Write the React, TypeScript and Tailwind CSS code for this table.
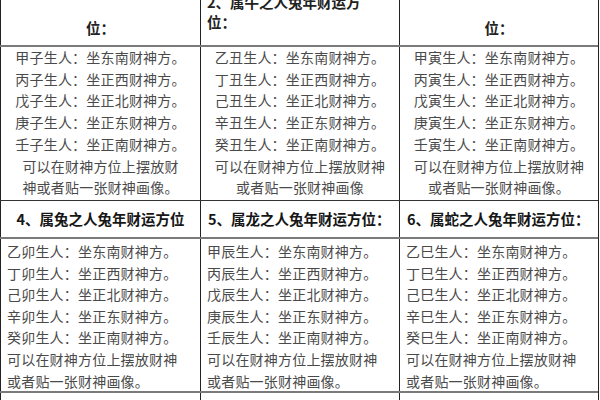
const font = { fontFamily: '"Noto Sans CJK SC", "Noto Sans", sans-serif' };

const row1 = [
  {
    lines: [
      "甲子生人：坐东南财神方。",
      "丙子生人：坐正西财神方。",
      "戊子生人：坐正北财神方。",
      "庚子生人：坐正东财神方。",
      "壬子生人：坐正南财神方。",
      "可以在财神方位上摆放财",
      "神或者贴一张财神画像。",
    ],
  },
  {
    lines: [
      "乙丑生人：坐东南财神方。",
      "丁丑生人：坐正西财神方。",
      "己丑生人：坐正北财神方。",
      "辛丑生人：坐正东财神方。",
      "癸丑生人：坐正南财神方。",
      "可以在财神方位上摆放财神",
      "或者贴一张财神画像",
    ],
  },
  {
    lines: [
      "甲寅生人：坐东南财神方。",
      "丙寅生人：坐正西财神方。",
      "戊寅生人：坐正北财神方。",
      "庚寅生人：坐正东财神方。",
      "壬寅生人：坐正南财神方。",
      "可以在财神方位上摆放财神",
      "或者贴一张财神画像。",
    ],
  },
];

const row2 = [
  {
    title: "4、属兔之人兔年财运方位",
    center: true,
    lines: [
      "乙卯生人：坐东南财神方。",
      "丁卯生人：坐正西财神方。",
      "己卯生人：坐正北财神方。",
      "辛卯生人：坐正东财神方。",
      "癸卯生人：坐正南财神方。",
      "可以在财神方位上摆放财神",
      "或者贴一张财神画像。",
    ],
  },
  {
    title: "5、属龙之人兔年财运方位：",
    center: false,
    lines: [
      "甲辰生人：坐东南财神方。",
      "丙辰生人：坐正西财神方。",
      "戊辰生人：坐正北财神方。",
      "庚辰生人：坐正东财神方。",
      "壬辰生人：坐正南财神方。",
      "可以在财神方位上摆放财神",
      "或者贴一张财神画像。",
    ],
  },
  {
    title: "6、属蛇之人兔年财运方位：",
    center: false,
    lines: [
      "乙巳生人：坐东南财神方。",
      "丁巳生人：坐正西财神方。",
      "己巳生人：坐正北财神方。",
      "辛巳生人：坐正东财神方。",
      "癸巳生人：坐正南财神方。",
      "可以在财神方位上摆放财神",
      "或者贴一张财神画像。",
    ],
  },
];

const colW = ["w-[200px]", "w-[199px]", "w-[199px]"];

export default function App() {
  return (
    <div className="w-[600px] h-[400px] overflow-hidden bg-white" style={font}>
      <div className="w-[599px] border-r border-[#222]">
        {/* row 1 header (cut off at top) */}
        <div className="flex h-[45px] overflow-hidden">
          <div className="w-[200px] border-l border-[#222] pt-[18px] text-center text-[14.5px] leading-[20px] font-bold text-[#222]">
            位：
          </div>
          <div className="w-[199px] border-l border-[#222] -mt-[8px] pl-[6px] text-[14.5px] leading-[20px] font-bold text-[#222]">
            <div className="whitespace-nowrap">2、属牛之人兔年财运方</div>
            <div>位：</div>
          </div>
          <div className="w-[199px] border-l border-[#222] pt-[18px] text-center text-[14.5px] leading-[20px] font-bold text-[#222]">
            位：
          </div>
        </div>
        <div className="h-[2px] bg-[#7a7a7a]" />

        {/* row 1 body */}
        <div className="flex h-[153px]">
          {row1.map((c, i) => (
            <div
              key={i}
              className={`${colW[i]} border-l border-[#222] text-center text-[14px] leading-[21.7px] tracking-[0.2px] text-[#4a4a4a]`}
            >
              {c.lines.map((l) => (
                <div key={l} className="whitespace-nowrap">
                  {l}
                </div>
              ))}
            </div>
          ))}
        </div>
        <div className="h-px bg-[#333]" />

        {/* row 2 header */}
        <div className="flex h-[36px]">
          {row2.map((c, i) => (
            <div
              key={i}
              className={`${colW[i]} border-l border-[#222] flex items-center ${
                c.center ? "justify-center" : "pl-[7px]"
              } text-[14.5px] font-bold text-[#161616] whitespace-nowrap`}
            >
              {c.title}
            </div>
          ))}
        </div>
        <div className="h-[2px] bg-[#7a7a7a]" />

        {/* row 2 body */}
        <div className="flex h-[152px]">
          {row2.map((c, i) => (
            <div
              key={i}
              className={`${colW[i]} border-l border-[#222] pt-[2px] pl-[6px] text-[14px] leading-[21.6px] tracking-[0.2px] text-[#4a4a4a]`}
            >
              {c.lines.map((l) => (
                <div key={l} className="whitespace-nowrap">
                  {l}
                </div>
              ))}
            </div>
          ))}
        </div>
        <div className="h-[2px] bg-[#7a7a7a]" />

        {/* row 3 (cut off) */}
        <div className="flex h-[20px]">
          <div className="w-[200px] border-l border-[#222]" />
          <div className="w-[199px] border-l border-[#222]" />
          <div className="w-[199px] border-l border-[#222]" />
        </div>
      </div>
    </div>
  );
}
